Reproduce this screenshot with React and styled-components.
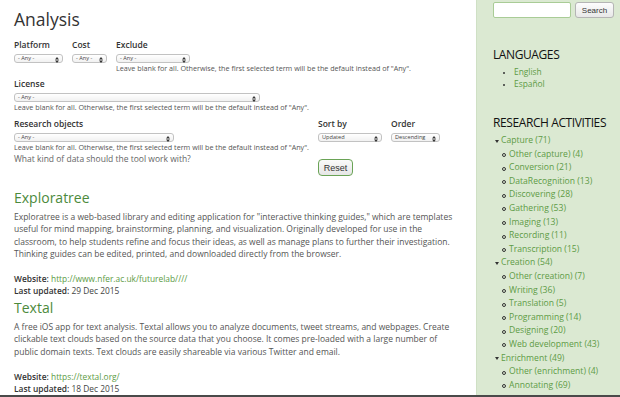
import React from 'react';
import styled, { createGlobalStyle } from 'styled-components';

const GlobalStyle = createGlobalStyle`
  html, body {
    margin: 0;
    padding: 0;
    background: #fff;
  }
  body {
    font-family: "Open Sans", "Noto Sans", "Liberation Sans", sans-serif;
    color: #555;
    width: 620px;
    height: 397px;
    overflow: hidden;
  }
`;

const Page = styled.div`
  display: flex;
  width: 620px;
  height: 395px;
  border-bottom: 2px solid #4a4a4a;
  overflow: hidden;
`;

const Main = styled.main`
  flex: 1;
  padding: 4px 0 0 14px;
  min-width: 0;
`;

const Sidebar = styled.aside`
  width: 127px;
  padding: 2px 0 0 16px;
  background: #dbe9d2;
  border-left: 1px solid #cfe0c5;
`;

const Title = styled.h1`
  margin: 0 0 5px;
  font-size: 17.5px;
  font-weight: 400;
  color: #333;
  line-height: 30px;
`;

const FieldRow = styled.div`
  display: flex;
  gap: 9px;
  margin-bottom: ${(p) => p.$mb || 0}px;
`;

const Field = styled.div`
  display: flex;
  flex-direction: column;
  margin-top: ${(p) => p.$mt || 0}px;
`;

const Label = styled.label`
  font-size: 8.5px;
  font-weight: 600;
  color: #333;
  line-height: 12px;
  margin-bottom: 3px;
`;

const SelectBox = styled.div`
  position: relative;
  box-sizing: border-box;
  width: ${(p) => p.$w}px;
  height: 9px;
  border: 1px solid #c2c2c2;
  border-radius: 3px;
  background: linear-gradient(#fff, #f1f1f1);
  font-size: 5.6px;
  line-height: 7px;
  color: #444;
  padding-left: 3px;
`;

const Arrows = styled.svg`
  position: absolute;
  right: 3px;
  top: 1.5px;
`;

const Help = styled.div`
  font-size: 7.2px;
  line-height: 10px;
  color: #555;
  white-space: nowrap;
`;

const Question = styled.div`
  font-size: 8.5px;
  line-height: 12px;
  color: #666;
  margin-top: 1px;
`;

const Reset = styled.button`
  margin-top: 17px;
  width: 35px;
  height: 17px;
  font-family: "Liberation Sans", Arial, sans-serif;
  font-size: 9px;
  color: #333;
  background: linear-gradient(#fafafa, #e6e6e6);
  border: 1px solid #6aa356;
  border-radius: 4px;
  padding: 0;
`;

const FilterGrid = styled.div`
  display: flex;
  gap: 9px;
`;

const Entry = styled.article`
  margin-top: ${(p) => p.$mt || 0}px;
`;

const EntryTitle = styled.h2`
  margin: 0;
  font-size: 14px;
  font-weight: 400;
  color: #4c8a3c;
  line-height: 20px;
`;

const Desc = styled.p`
  margin: 3px 0 13px;
  font-size: 8.5px;
  line-height: 12.3px;
  color: #555;
  white-space: nowrap;
`;

const Meta = styled.div`
  font-size: 8.4px;
  line-height: 12px;
  color: #444;
  b {
    font-weight: 600;
    color: #333;
  }
  a {
    color: #5d9b45;
    text-decoration: none;
  }
`;

const SearchRow = styled.div`
  display: flex;
  gap: 4px;
`;

const SearchInput = styled.div`
  box-sizing: border-box;
  width: 78px;
  height: 16px;
  background: #fff;
  border: 1px solid #a9cc96;
  border-radius: 2px;
`;

const SearchButton = styled.button`
  width: 39px;
  height: 16px;
  padding: 0;
  font-family: "Liberation Sans", Arial, sans-serif;
  font-size: 8px;
  color: #333;
  background: linear-gradient(#fdfdfd, #e8e8e8);
  border: 1px solid #b5b5b5;
  border-radius: 3px;
`;

const BlockTitle = styled.h3`
  margin: ${(p) => p.$mt}px 0 4px;
  font-size: 12px;
  font-weight: 400;
  color: #111;
  letter-spacing: -0.4px;
  line-height: 14px;
`;

const LangList = styled.ul`
  margin: 0;
  padding: 0 0 0 21px;
  list-style: disc;
  font-size: 8.4px;
  line-height: 12px;
  color: #333;
  li::marker {
    font-size: 7px;
  }
  a {
    color: #5d9b45;
    text-decoration: none;
  }
`;

const Tree = styled.ul`
  margin: 0;
  padding: 0 0 0 2px;
  list-style: none;
  font-size: 8.6px;
  line-height: 13.6px;
  a {
    color: #5d9b45;
    text-decoration: none;
  }
`;

const Branch = styled.li`
  position: relative;
  padding-left: 6px;
  &::before {
    content: '';
    position: absolute;
    left: 0;
    top: 5.5px;
    border-left: 2.5px solid transparent;
    border-right: 2.5px solid transparent;
    border-top: 3px solid #333;
  }
`;

const Leaves = styled.ul`
  margin: 0;
  padding: 0;
  list-style: none;
`;

const Leaf = styled.li`
  position: relative;
  padding-left: 8px;
  &::before {
    content: '';
    position: absolute;
    left: 1px;
    top: 5.5px;
    width: 2px;
    height: 2px;
    border: 1px solid #333;
    border-radius: 50%;
  }
`;

function Select({ w, value = '- Any -' }) {
  return (
    <SelectBox $w={w}>
      {value}
      <Arrows width="4" height="6" viewBox="0 0 4 6">
        <path d="M0 2.4 L2 0 L4 2.4 Z M0 3.6 L2 6 L4 3.6 Z" fill="#333" />
      </Arrows>
    </SelectBox>
  );
}

function Lines({ lines }) {
  return (
    <Desc>
      {lines.map((l, i) => (
        <React.Fragment key={i}>
          {l}
          {i < lines.length - 1 && <br />}
        </React.Fragment>
      ))}
    </Desc>
  );
}

const HELP = 'Leave blank for all. Otherwise, the first selected term will be the default instead of "Any".';

const activities = [
  {
    name: 'Capture (71)',
    items: [
      'Other (capture) (4)',
      'Conversion (21)',
      'DataRecognition (13)',
      'Discovering (28)',
      'Gathering (53)',
      'Imaging (13)',
      'Recording (11)',
      'Transcription (15)',
    ],
  },
  {
    name: 'Creation (54)',
    items: [
      'Other (creation) (7)',
      'Writing (36)',
      'Translation (5)',
      'Programming (14)',
      'Designing (20)',
      'Web development (43)',
    ],
  },
  {
    name: 'Enrichment (49)',
    items: ['Other (enrichment) (4)', 'Annotating (69)'],
  },
];

const tools = [
  {
    name: 'Exploratree',
    lines: [
      'Exploratree is a web-based library and editing application for "interactive thinking guides," which are templates',
      'useful for mind mapping, brainstorming, planning, and visualization. Originally developed for use in the',
      'classroom, to help students refine and focus their ideas, as well as manage plans to further their investigation.',
      'Thinking guides can be edited, printed, and downloaded directly from the browser.',
    ],
    url: 'http://www.nfer.ac.uk/futurelab////',
    updated: '29 Dec 2015',
  },
  {
    name: 'Textal',
    lines: [
      'A free iOS app for text analysis. Textal allows you to analyze documents, tweet streams, and webpages. Create',
      'clickable text clouds based on the source data that you choose. It comes pre-loaded with a large number of',
      'public domain texts. Text clouds are easily shareable via various Twitter and email.',
    ],
    url: 'https://textal.org/',
    updated: '18 Dec 2015',
  },
];

export default function App() {
  return (
    <>
      <GlobalStyle />
      <Page>
        <Main>
          <Title>Analysis</Title>
          <FieldRow $mb={5}>
            <Field>
              <Label>Platform</Label>
              <Select w={49} />
            </Field>
            <Field>
              <Label>Cost</Label>
              <Select w={35} />
            </Field>
            <Field>
              <Label>Exclude</Label>
              <Select w={74} />
              <Help>{HELP}</Help>
            </Field>
          </FieldRow>
          <Field>
            <Label>License</Label>
            <Select w={246} />
            <Help>{HELP}</Help>
          </Field>
          <FilterGrid>
            <Field $mt={6}>
              <Label>Research objects</Label>
              <Select w={160} />
              <Help>{HELP}</Help>
              <Question>What kind of data should the tool work with?</Question>
            </Field>
            <Field $mt={6}>
              <FieldRow>
                <Field>
                  <Label>Sort by</Label>
                  <Select w={64} value="Updated" />
                </Field>
                <Field>
                  <Label>Order</Label>
                  <Select w={49} value="Descending" />
                </Field>
              </FieldRow>
              <div>
                <Reset>Reset</Reset>
              </div>
            </Field>
          </FilterGrid>

          {tools.map((t, i) => (
            <Entry key={t.name} $mt={i === 0 ? 12 : 1}>
              <EntryTitle>{t.name}</EntryTitle>
              <Lines lines={t.lines} />
              <Meta>
                <b>Website:</b> <a href="#">{t.url}</a>
              </Meta>
              <Meta>
                <b>Last updated:</b> {t.updated}
              </Meta>
            </Entry>
          ))}
        </Main>
        <Sidebar>
          <SearchRow>
            <SearchInput />
            <SearchButton>Search</SearchButton>
          </SearchRow>
          <BlockTitle $mt={30}>LANGUAGES</BlockTitle>
          <LangList>
            <li><a href="#">English</a></li>
            <li><a href="#">Español</a></li>
          </LangList>
          <BlockTitle $mt={26}>RESEARCH ACTIVITIES</BlockTitle>
          <Tree>
            {activities.map((a) => (
              <Branch key={a.name}>
                <a href="#">{a.name}</a>
                <Leaves>
                  {a.items.map((i) => (
                    <Leaf key={i}>
                      <a href="#">{i}</a>
                    </Leaf>
                  ))}
                </Leaves>
              </Branch>
            ))}
          </Tree>
        </Sidebar>
      </Page>
    </>
  );
}
